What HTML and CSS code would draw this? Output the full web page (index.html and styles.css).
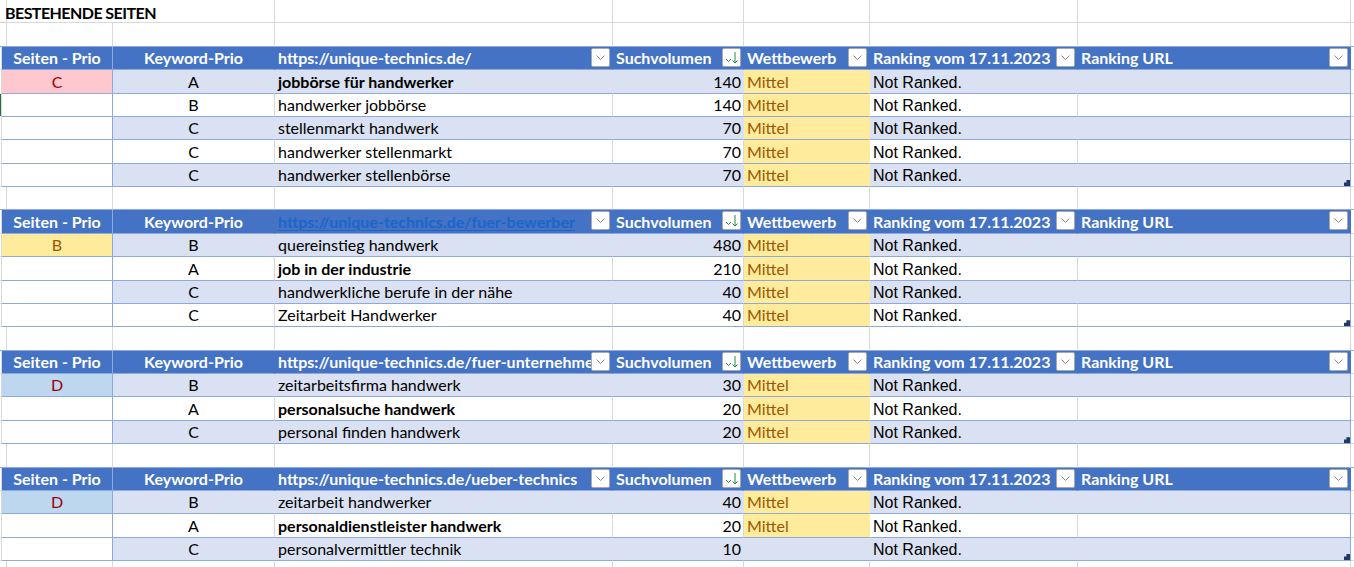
FILE: index.html
```html
<!DOCTYPE html>
<html lang="de">
<head>
<meta charset="utf-8">
<title>Bestehende Seiten</title>
<link rel="stylesheet" href="styles.css">
</head>
<body>
<div class="sheet">

  <div class="row plain title-row">
    <div class="cell"></div>
    <div class="cell title">BESTEHENDE SEITEN</div>
    <div class="cell"></div><div class="cell"></div><div class="cell"></div><div class="cell"></div><div class="cell"></div><div class="cell"></div>
  </div>
  <div class="row plain pre">
    <div class="cell"></div><div class="cell"></div><div class="cell"></div><div class="cell"></div><div class="cell"></div><div class="cell"></div><div class="cell"></div><div class="cell"></div><div class="cell"></div>
  </div>

  <!-- Table 1 -->
  <div class="row head">
    <div class="cell edge"></div>
    <div class="cell hc ctr sep">Seiten - Prio</div>
    <div class="cell hc ctr">Keyword-Prio</div>
    <div class="cell hc">https://unique-technics.de/<span class="flt"><svg width="9" height="5" viewBox="0 0 9 5"><path d="M0.5 0.5l4 4 4-4" stroke="#8a8a8a" fill="none"/></svg></span></div>
    <div class="cell hc">Suchvolumen<span class="flt"><svg width="14" height="15" viewBox="0 0 14 15"><path d="M1 9l2.5 2.5L6 9" stroke="#1e8a4a" fill="none"/><path d="M10 2v11M7.5 10.5L10 13l2.5-2.5" stroke="#1e8a4a" fill="none"/></svg></span></div>
    <div class="cell hc">Wettbewerb<span class="flt"><svg width="9" height="5" viewBox="0 0 9 5"><path d="M0.5 0.5l4 4 4-4" stroke="#8a8a8a" fill="none"/></svg></span></div>
    <div class="cell hc">Ranking vom 17.11.2023<span class="flt"><svg width="9" height="5" viewBox="0 0 9 5"><path d="M0.5 0.5l4 4 4-4" stroke="#8a8a8a" fill="none"/></svg></span></div>
    <div class="cell hc">Ranking URL<span class="flt"><svg width="9" height="5" viewBox="0 0 9 5"><path d="M0.5 0.5l4 4 4-4" stroke="#8a8a8a" fill="none"/></svg></span></div>
    <div class="cell"></div>
  </div>
  <div class="row data band">
    <div class="cell edge"></div>
    <div class="cell sp ctr prio-c">C</div>
    <div class="cell ctr">A</div>
    <div class="cell b">jobbörse für handwerker</div>
    <div class="cell num">140</div>
    <div class="cell neutral">Mittel</div>
    <div class="cell nr">Not Ranked.</div>
    <div class="cell"></div>
    <div class="cell out"></div>
  </div>
  <div class="row data white">
    <div class="cell edge sel"></div>
    <div class="cell sp"></div>
    <div class="cell ctr">B</div>
    <div class="cell">handwerker jobbörse</div>
    <div class="cell num">140</div>
    <div class="cell neutral">Mittel</div>
    <div class="cell nr">Not Ranked.</div>
    <div class="cell"></div>
    <div class="cell out"></div>
  </div>
  <div class="row data band">
    <div class="cell edge"></div>
    <div class="cell sp"></div>
    <div class="cell ctr">C</div>
    <div class="cell">stellenmarkt handwerk</div>
    <div class="cell num">70</div>
    <div class="cell neutral">Mittel</div>
    <div class="cell nr">Not Ranked.</div>
    <div class="cell"></div>
    <div class="cell out"></div>
  </div>
  <div class="row data white">
    <div class="cell edge"></div>
    <div class="cell sp"></div>
    <div class="cell ctr">C</div>
    <div class="cell">handwerker stellenmarkt</div>
    <div class="cell num">70</div>
    <div class="cell neutral">Mittel</div>
    <div class="cell nr">Not Ranked.</div>
    <div class="cell"></div>
    <div class="cell out"></div>
  </div>
  <div class="row data band">
    <div class="cell edge"></div>
    <div class="cell sp"></div>
    <div class="cell ctr">C</div>
    <div class="cell">handwerker stellenbörse</div>
    <div class="cell num">70</div>
    <div class="cell neutral">Mittel</div>
    <div class="cell nr">Not Ranked.</div>
    <div class="cell"><span class="grip"></span></div>
    <div class="cell out"></div>
  </div>
  <div class="row plain pre">
    <div class="cell"></div><div class="cell"></div><div class="cell"></div><div class="cell"></div><div class="cell"></div><div class="cell"></div><div class="cell"></div><div class="cell"></div><div class="cell"></div>
  </div>

  <!-- Table 2 -->
  <div class="row head">
    <div class="cell edge"></div>
    <div class="cell hc ctr sep">Seiten - Prio</div>
    <div class="cell hc ctr">Keyword-Prio</div>
    <div class="cell hc"><span class="link">https://unique-technics.de/fuer-bewerber</span><span class="flt"><svg width="9" height="5" viewBox="0 0 9 5"><path d="M0.5 0.5l4 4 4-4" stroke="#8a8a8a" fill="none"/></svg></span></div>
    <div class="cell hc">Suchvolumen<span class="flt"><svg width="14" height="15" viewBox="0 0 14 15"><path d="M1 9l2.5 2.5L6 9" stroke="#1e8a4a" fill="none"/><path d="M10 2v11M7.5 10.5L10 13l2.5-2.5" stroke="#1e8a4a" fill="none"/></svg></span></div>
    <div class="cell hc">Wettbewerb<span class="flt"><svg width="9" height="5" viewBox="0 0 9 5"><path d="M0.5 0.5l4 4 4-4" stroke="#8a8a8a" fill="none"/></svg></span></div>
    <div class="cell hc">Ranking vom 17.11.2023<span class="flt"><svg width="9" height="5" viewBox="0 0 9 5"><path d="M0.5 0.5l4 4 4-4" stroke="#8a8a8a" fill="none"/></svg></span></div>
    <div class="cell hc">Ranking URL<span class="flt"><svg width="9" height="5" viewBox="0 0 9 5"><path d="M0.5 0.5l4 4 4-4" stroke="#8a8a8a" fill="none"/></svg></span></div>
    <div class="cell"></div>
  </div>
  <div class="row data band">
    <div class="cell edge"></div>
    <div class="cell sp ctr prio-b">B</div>
    <div class="cell ctr">B</div>
    <div class="cell">quereinstieg handwerk</div>
    <div class="cell num">480</div>
    <div class="cell neutral">Mittel</div>
    <div class="cell nr">Not Ranked.</div>
    <div class="cell"></div>
    <div class="cell out"></div>
  </div>
  <div class="row data white">
    <div class="cell edge"></div>
    <div class="cell sp"></div>
    <div class="cell ctr">A</div>
    <div class="cell b">job in der industrie</div>
    <div class="cell num">210</div>
    <div class="cell neutral">Mittel</div>
    <div class="cell nr">Not Ranked.</div>
    <div class="cell"></div>
    <div class="cell out"></div>
  </div>
  <div class="row data band">
    <div class="cell edge"></div>
    <div class="cell sp"></div>
    <div class="cell ctr">C</div>
    <div class="cell">handwerkliche berufe in der nähe</div>
    <div class="cell num">40</div>
    <div class="cell neutral">Mittel</div>
    <div class="cell nr">Not Ranked.</div>
    <div class="cell"></div>
    <div class="cell out"></div>
  </div>
  <div class="row data white">
    <div class="cell edge"></div>
    <div class="cell sp"></div>
    <div class="cell ctr">C</div>
    <div class="cell">Zeitarbeit Handwerker</div>
    <div class="cell num">40</div>
    <div class="cell neutral">Mittel</div>
    <div class="cell nr">Not Ranked.</div>
    <div class="cell"><span class="grip"></span></div>
    <div class="cell out"></div>
  </div>
  <div class="row plain pre">
    <div class="cell"></div><div class="cell"></div><div class="cell"></div><div class="cell"></div><div class="cell"></div><div class="cell"></div><div class="cell"></div><div class="cell"></div><div class="cell"></div>
  </div>

  <!-- Table 3 -->
  <div class="row head">
    <div class="cell edge"></div>
    <div class="cell hc ctr sep">Seiten - Prio</div>
    <div class="cell hc ctr">Keyword-Prio</div>
    <div class="cell hc">https://unique-technics.de/fuer-unternehmen<span class="flt"><svg width="9" height="5" viewBox="0 0 9 5"><path d="M0.5 0.5l4 4 4-4" stroke="#8a8a8a" fill="none"/></svg></span></div>
    <div class="cell hc">Suchvolumen<span class="flt"><svg width="14" height="15" viewBox="0 0 14 15"><path d="M1 9l2.5 2.5L6 9" stroke="#1e8a4a" fill="none"/><path d="M10 2v11M7.5 10.5L10 13l2.5-2.5" stroke="#1e8a4a" fill="none"/></svg></span></div>
    <div class="cell hc">Wettbewerb<span class="flt"><svg width="9" height="5" viewBox="0 0 9 5"><path d="M0.5 0.5l4 4 4-4" stroke="#8a8a8a" fill="none"/></svg></span></div>
    <div class="cell hc">Ranking vom 17.11.2023<span class="flt"><svg width="9" height="5" viewBox="0 0 9 5"><path d="M0.5 0.5l4 4 4-4" stroke="#8a8a8a" fill="none"/></svg></span></div>
    <div class="cell hc">Ranking URL<span class="flt"><svg width="9" height="5" viewBox="0 0 9 5"><path d="M0.5 0.5l4 4 4-4" stroke="#8a8a8a" fill="none"/></svg></span></div>
    <div class="cell"></div>
  </div>
  <div class="row data band">
    <div class="cell edge"></div>
    <div class="cell sp ctr prio-d">D</div>
    <div class="cell ctr">B</div>
    <div class="cell">zeitarbeitsfirma handwerk</div>
    <div class="cell num">30</div>
    <div class="cell neutral">Mittel</div>
    <div class="cell nr">Not Ranked.</div>
    <div class="cell"></div>
    <div class="cell out"></div>
  </div>
  <div class="row data white">
    <div class="cell edge"></div>
    <div class="cell sp"></div>
    <div class="cell ctr">A</div>
    <div class="cell b">personalsuche handwerk</div>
    <div class="cell num">20</div>
    <div class="cell neutral">Mittel</div>
    <div class="cell nr">Not Ranked.</div>
    <div class="cell"></div>
    <div class="cell out"></div>
  </div>
  <div class="row data band">
    <div class="cell edge"></div>
    <div class="cell sp"></div>
    <div class="cell ctr">C</div>
    <div class="cell">personal finden handwerk</div>
    <div class="cell num">20</div>
    <div class="cell neutral">Mittel</div>
    <div class="cell nr">Not Ranked.</div>
    <div class="cell"><span class="grip"></span></div>
    <div class="cell out"></div>
  </div>
  <div class="row plain pre">
    <div class="cell"></div><div class="cell"></div><div class="cell"></div><div class="cell"></div><div class="cell"></div><div class="cell"></div><div class="cell"></div><div class="cell"></div><div class="cell"></div>
  </div>

  <!-- Table 4 -->
  <div class="row head">
    <div class="cell edge"></div>
    <div class="cell hc ctr sep">Seiten - Prio</div>
    <div class="cell hc ctr">Keyword-Prio</div>
    <div class="cell hc">https://unique-technics.de/ueber-technics<span class="flt"><svg width="9" height="5" viewBox="0 0 9 5"><path d="M0.5 0.5l4 4 4-4" stroke="#8a8a8a" fill="none"/></svg></span></div>
    <div class="cell hc">Suchvolumen<span class="flt"><svg width="14" height="15" viewBox="0 0 14 15"><path d="M1 9l2.5 2.5L6 9" stroke="#1e8a4a" fill="none"/><path d="M10 2v11M7.5 10.5L10 13l2.5-2.5" stroke="#1e8a4a" fill="none"/></svg></span></div>
    <div class="cell hc">Wettbewerb<span class="flt"><svg width="9" height="5" viewBox="0 0 9 5"><path d="M0.5 0.5l4 4 4-4" stroke="#8a8a8a" fill="none"/></svg></span></div>
    <div class="cell hc">Ranking vom 17.11.2023<span class="flt"><svg width="9" height="5" viewBox="0 0 9 5"><path d="M0.5 0.5l4 4 4-4" stroke="#8a8a8a" fill="none"/></svg></span></div>
    <div class="cell hc">Ranking URL<span class="flt"><svg width="9" height="5" viewBox="0 0 9 5"><path d="M0.5 0.5l4 4 4-4" stroke="#8a8a8a" fill="none"/></svg></span></div>
    <div class="cell"></div>
  </div>
  <div class="row data band">
    <div class="cell edge"></div>
    <div class="cell sp ctr prio-d">D</div>
    <div class="cell ctr">B</div>
    <div class="cell">zeitarbeit handwerker</div>
    <div class="cell num">40</div>
    <div class="cell neutral">Mittel</div>
    <div class="cell nr">Not Ranked.</div>
    <div class="cell"></div>
    <div class="cell out"></div>
  </div>
  <div class="row data white">
    <div class="cell edge"></div>
    <div class="cell sp"></div>
    <div class="cell ctr">A</div>
    <div class="cell b">personaldienstleister handwerk</div>
    <div class="cell num">20</div>
    <div class="cell neutral">Mittel</div>
    <div class="cell nr">Not Ranked.</div>
    <div class="cell"></div>
    <div class="cell out"></div>
  </div>
  <div class="row data band">
    <div class="cell edge"></div>
    <div class="cell sp"></div>
    <div class="cell ctr">C</div>
    <div class="cell">personalvermittler technik</div>
    <div class="cell num">10</div>
    <div class="cell"></div>
    <div class="cell nr">Not Ranked.</div>
    <div class="cell"><span class="grip"></span></div>
    <div class="cell out"></div>
  </div>
  <div class="row plain">
    <div class="cell"></div><div class="cell"></div><div class="cell"></div><div class="cell"></div><div class="cell"></div><div class="cell"></div><div class="cell"></div><div class="cell"></div><div class="cell"></div>
  </div>

</div>
</body>
</html>
```

FILE: styles.css
```css
html, body {
  margin: 0;
  padding: 0;
  background: #ffffff;
}

body {
  font-family: Lato, "Noto Sans", sans-serif;
  font-size: 16px;
  color: #000000;
}

.sheet {
  width: 1354px;
  overflow: hidden;
}

.row {
  display: grid;
  grid-template-columns: 2px 111px 162px 338px 131px 126px 208px 273px 3px;
  height: 23.375px;
}

.cell {
  box-sizing: border-box;
  position: relative;
  display: flex;
  align-items: flex-end;
  padding: 0 3px 2px 3px;
  line-height: 19px;
  white-space: nowrap;
  overflow: hidden;
  border-right: 1px solid #d9d9d9;
  border-bottom: 1px solid #d9d9d9;
}

.edge {
  padding: 0;
}

.sel {
  background: #217346;
}

/* title row */
.title-row .title {
  grid-column: span 2;
  font-weight: 700;
  letter-spacing: -0.55px;
  padding-bottom: 0;
  overflow: visible;
}

.pre .cell {
  border-bottom-color: #8ea9db;
}

/* header rows */
.head .hc {
  background: #4472c4;
  color: #ffffff;
  font-weight: 700;
  border-right-color: #4472c4;
  border-bottom-color: #8ea9db;
  padding-left: 3px;
}

.head .sep {
  border-right-color: #8ea9db;
}

.ctr {
  justify-content: center;
}

.link {
  color: #1d66c9;
  text-decoration: underline;
  text-decoration-thickness: 1px;
  text-underline-offset: 2px;
}

.flt {
  position: absolute;
  right: 2px;
  top: 1px;
  width: 19px;
  height: 19px;
  box-sizing: border-box;
  background: #ffffff;
  border: 1px solid #a9a9a9;
  border-radius: 2px;
  display: flex;
  align-items: center;
  justify-content: center;
}

/* data rows */
.data .cell {
  border-bottom-color: #8ea9db;
}

.data .cell.edge {
  border-bottom-color: #d9d9d9;
}

.band .cell {
  background: #d9e1f2;
  border-right-color: #d9e1f2;
}

.band .cell.sp,
.band .cell.edge,
.band .cell.out {
  background: #ffffff;
  border-right-color: #d9d9d9;
}

.band .cell.edge.sel,
.white .cell.edge.sel {
  background: #217346;
}

.data .cell.sp {
  border-right-color: #8ea9db;
}

.data .cell.out {
  border-bottom-color: #d9d9d9;
}

.data .cell:nth-child(8) {
  border-right-color: #8ea9db;
}

.b {
  font-weight: 700;
}

.num {
  justify-content: flex-end;
  padding-right: 2px;
}

.data .neutral {
  background: #ffeb9c;
  color: #9c5700;
  border-right-color: #ffeb9c;
}

.nr {
  font-family: "Liberation Sans", Arial, sans-serif;
  font-size: 16px;
  padding-bottom: 1px;
}

.data .prio-c {
  background: #ffc7ce;
  color: #9c0006;
}

.data .prio-b {
  background: #ffeb9c;
  color: #9c5700;
}

.data .prio-d {
  background: #bdd7ee;
  color: #9c0006;
}

.band .cell.prio-c { background: #ffc7ce; }
.band .cell.prio-b { background: #ffeb9c; }
.band .cell.prio-d { background: #bdd7ee; }

.grip {
  position: absolute;
  right: 0;
  bottom: 0;
  width: 6px;
  height: 6px;
  background: #1f3864;
  clip-path: polygon(100% 0, 100% 100%, 0 100%, 0 40%, 40% 40%, 40% 0);
}
```
